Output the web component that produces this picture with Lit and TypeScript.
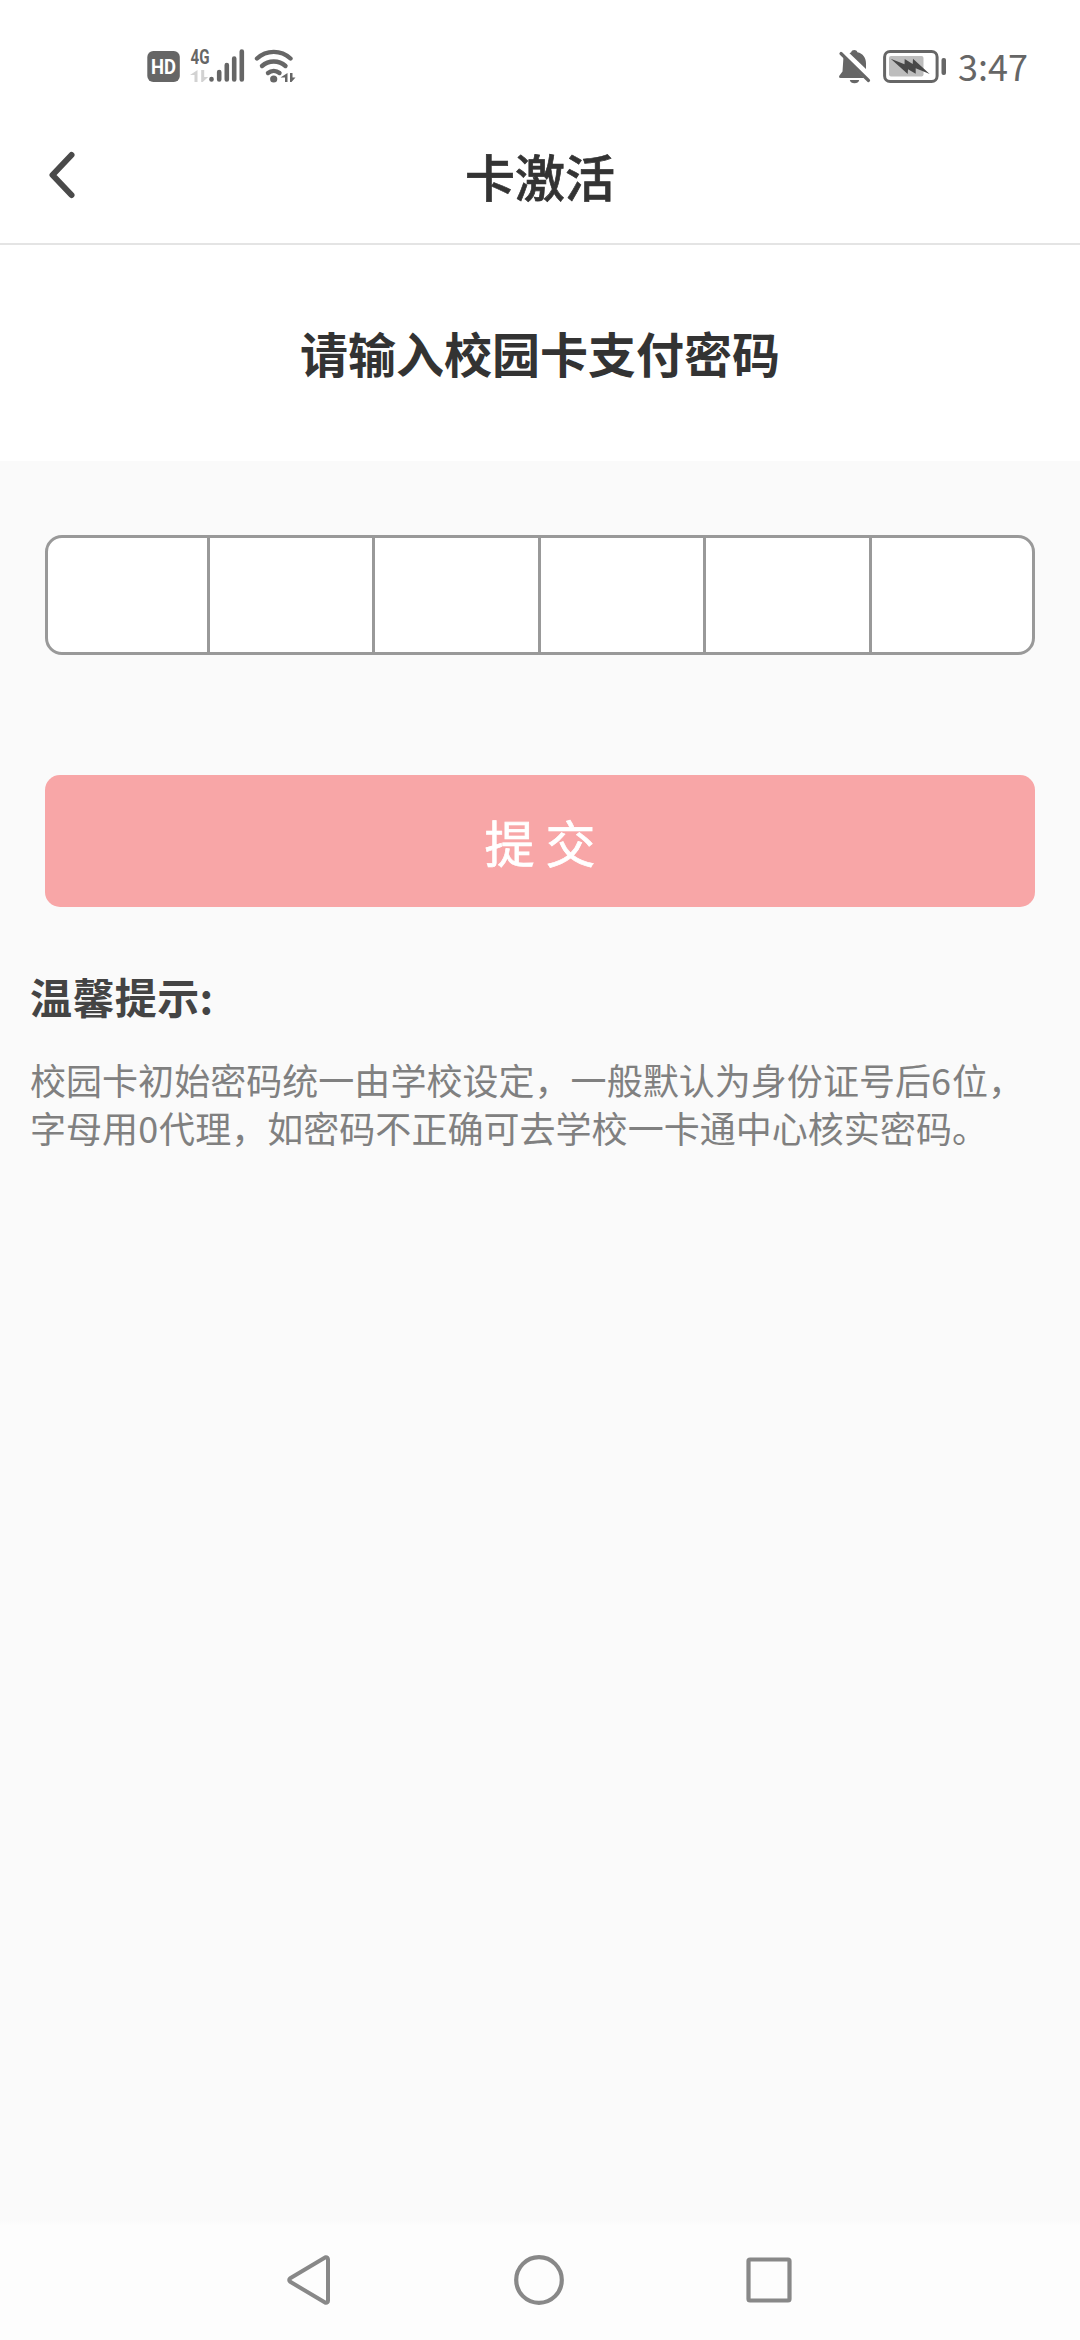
import { LitElement, html, css } from "lit";
import { customElement, state } from "lit/decorators.js";

@customElement("app-root")
class AppRoot extends LitElement {
  @state() private digits: string[] = ["", "", "", "", "", ""];

  static styles = css`
    :host {
      display: flex;
      flex-direction: column;
      width: 1080px;
      height: 2340px;
      overflow: hidden;
      background: #fafafa;
      color: #333;
      font-family: "Noto Sans CJK SC", sans-serif;
    }
    svg {
      display: block;
      flex: none;
    }
    .status {
      display: flex;
      box-sizing: border-box;
      height: 120px;
      padding: 40px 45px 0 140px;
      justify-content: space-between;
      background: #fff;
    }
    .group {
      display: flex;
      height: 52px;
    }
    .badge {
      font: 700 20px Roboto, sans-serif;
      fill: #fff;
    }
    .net {
      font: 700 21px Roboto, sans-serif;
      fill: #666;
    }
    .time {
      width: 77px;
      margin-left: 8px;
      font-size: 36px;
      line-height: 51px;
      white-space: nowrap;
      color: #666;
    }
    .header {
      display: grid;
      grid-template-columns: 90px 1fr 90px;
      align-items: center;
      box-sizing: border-box;
      height: 125px;
      padding-bottom: 13px;
      border-bottom: 2px solid #e4e4e4;
      background: #fff;
    }
    .back {
      margin-left: 40px;
    }
    .title {
      margin: 0;
      text-align: center;
      font-size: 50px;
      line-height: 70px;
      font-weight: 500;
      -webkit-text-stroke: 0.7px #333;
    }
    .prompt {
      box-sizing: border-box;
      height: 216px;
      padding-top: 72px;
      background: #fff;
      text-align: center;
      font-size: 48px;
      line-height: 70px;
      font-weight: 700;
    }
    .pin {
      display: grid;
      grid-template-columns: 162px 165px 166px 165px 166px 1fr;
      box-sizing: border-box;
      height: 120px;
      margin: 74px 45px 0;
      border: 3px solid #999;
      border-radius: 17px;
      overflow: hidden;
      background: #fff;
    }
    .cell {
      border-right: 3px solid #999;
    }
    .cell:last-child {
      border-right: 0;
    }
    .submit {
      height: 132px;
      margin: 120px 45px 0;
      padding: 0;
      border: 0;
      border-radius: 15px;
      background: #f8a6a7;
      color: #fff;
      font: inherit;
      font-size: 50px;
      line-height: 132px;
      -webkit-text-stroke: 0.7px #fff;
    }
    .tips {
      padding: 59px 30px 0;
    }
    .tips-title {
      margin: 0;
      font-size: 42px;
      line-height: 60px;
      font-weight: 700;
      letter-spacing: 0.4px;
      color: #444;
    }
    .tips-text {
      margin: 29px 0 0;
      font-size: 36px;
      line-height: 48px;
      letter-spacing: 0.04px;
      color: #808080;
      white-space: nowrap;
    }
    .digit {
      letter-spacing: 1px;
    }
    .nav {
      display: flex;
      align-items: center;
      justify-content: space-between;
      box-sizing: border-box;
      height: 121px;
      margin-top: auto;
      padding: 0 284px 0 283px;
      background: linear-gradient(#fafafa, #fdfdfd 6px);
    }
  `;

  private renderStatus() {
    return html`
      <div class="status">
        <div class="group">
          <svg width="170" height="52" viewBox="140 40 170 52">
            <rect x="147.3" y="51" width="32.5" height="31" rx="6" fill="#666" />
            <text class="badge" x="151" y="74" textLength="25" lengthAdjust="spacingAndGlyphs">HD</text>
            <text class="net" x="190.5" y="64" textLength="19" lengthAdjust="spacingAndGlyphs">4G</text>
            <path d="M197.500 70v12h-3v-7h-4.500zM201.200 70h3v7h4l-5.500 5h-1.500z" fill="#d2d2d2" />
            <path
              d="M211.500 79v.5M219.200 79.500v-7.500M226.800 79.500v-14.500M234.200 79.500v-21M241.800 79.500v-28"
              fill="none" stroke="#666" stroke-width="4.600" stroke-linecap="round" />
            <g fill="none" stroke="#666" stroke-width="4.400" stroke-linecap="round">
              <path d="M257 58.500a24.500 24.500 0 0 1 33.500 0" />
              <path d="M262 66a17.500 17.500 0 0 1 23.500 0" />
              <path d="M268 73a9 9 0 0 1 11.500 0" />
            </g>
            <circle cx="273.700" cy="79" r="3.600" fill="#666" />
            <path d="M287.500 73v9h-2.500v-4.500h-4.500zM290 73h2.500v4.500h3l-4 4.500h-1.500z" fill="#666" />
          </svg>
        </div>
        <div class="group">
          <svg width="114" height="52" viewBox="836 40 114 52">
            <g fill="#666">
              <path d="M843.500 56.500 864 78h-23.500c-1.500 0-1.800-1.500-1-2.600l3-4z" />
              <path d="M849.500 53.200l1.700-.9c.5-3 5.600-3 6.200 0 5.600 1.300 8.600 5.500 8.600 11v5.700z" />
              <path d="M849.800 80h9.400a4.800 4 0 0 1-9.400 0z" />
              <rect x="941.500" y="58" width="4.500" height="17" rx="2" />
            </g>
            <path d="M841 53.500 868.500 80.500" stroke="#666" stroke-width="3.200" stroke-linecap="round" />
            <rect x="884.600" y="51.500" width="52.500" height="30" rx="5.500" fill="none" stroke="#666" stroke-width="3" />
            <rect x="889" y="56" width="34.500" height="20.500" rx="2" fill="#bdbdbd" />
            <path
              d="M890.700 58.700 904.500 64.300 904.700 59 912.700 64 913 58.700 929.700 74 915.700 68.300V73.700L908 69.300 907.700 74z"
              fill="#484848" />
          </svg>
          <span class="time">3:47</span>
        </div>
      </div>
    `;
  }

  private renderNav() {
    return html`
      <nav class="nav">
        <svg width="52" height="60" viewBox="283 2249 52 60">
          <path
            d="M325.500 2256.300 290.200 2277.200Q288.200 2279 290.200 2280.800L325.500 2301.700Q328 2302 328 2299.500V2258.500Q328 2256 325.500 2256.300z"
            fill="none" stroke="#888" stroke-width="4" stroke-linejoin="round" />
        </svg>
        <svg width="60" height="60" viewBox="510 2249 60 60">
          <circle cx="540" cy="2279" r="22.800" fill="none" stroke="#888" stroke-width="4.200" />
        </svg>
        <svg width="54" height="60" viewBox="742 2249 54 60">
          <rect x="748.500" y="2258.500" width="41" height="41" rx="1.500" fill="none" stroke="#888" stroke-width="4.200" />
        </svg>
      </nav>
    `;
  }

  render() {
    return html`
      ${this.renderStatus()}
      <header class="header">
        <svg class="back" width="40" height="54" viewBox="40 149 40 54">
          <path
            d="M71.500 156 52.500 176l19 20"
            fill="none" stroke="#4a4a4a" stroke-width="6" stroke-linecap="round" stroke-linejoin="round" />
        </svg>
        <h1 class="title">卡激活</h1>
      </header>
      <div class="prompt">请输入校园卡支付密码</div>
      <div class="pin">${this.digits.map((d) => html`<div class="cell">${d}</div>`)}</div>
      <button class="submit">提 交</button>
      <section class="tips">
        <h2 class="tips-title">温馨提示:</h2>
        <p class="tips-text">
          校园卡初始密码统一由学校设定，一般默认为身份证号后<span class="digit">6</span>位，<br />字母用<span class="digit">0</span>代理，如密码不正确可去学校一卡通中心核实密码。
        </p>
      </section>
      ${this.renderNav()}
    `;
  }
}
